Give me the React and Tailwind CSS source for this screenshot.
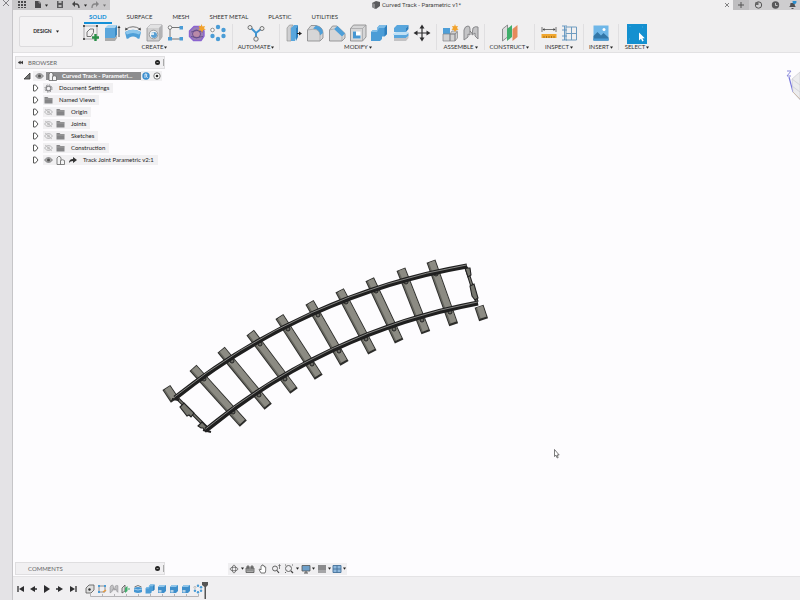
const Svg = ({ s = 18, w, children, className = '' }) => (
    <svg width={w || s} height={s} viewBox={`0 0 ${w || s} ${s}`} className={`shrink-0 ${className}`} fill="none" aria-hidden="true">
        {children}
    </svg>
);

const Caret = ({ className = '' }) => (
    <svg width="3" height="3" viewBox="0 0 3 3" className={`shrink-0 ${className}`} aria-hidden="true">
        <path d="M0 .5h3L1.500 2.800z" fill="#222" />
    </svg>
);

/* toolbar icons */

const SketchIcon = () => (
    <Svg>
        <rect x="2" y="2" width="13" height="13" stroke="#9a9a9c" strokeWidth=".8" />
        <path d="M5 12.500V8l3-3h3.500v3.500L9 12.500z" stroke="#666" strokeWidth=".9" />
        <path d="M1 1h2v2H1zM14 1h2v2h-2zM1 14h2v2H1z" fill="#555" />
        <path d="M13.500 10v7M10 13.500h7" stroke="#2a8f48" strokeWidth="2.400" />
    </Svg>
);

const ExtrudeIcon = () => (
    <Svg>
        <path d="M2 4l3-3h9l-2 3z" fill="#a9d3ef" />
        <path d="M2 4h10v10H2z" fill="#5aa6dc" />
        <path d="M12 4l2-3v10l-2 3z" fill="#3a88c2" />
        <path d="M2 14h10l2-3v3l-2 3H2z" fill="#aaa" />
        <path d="M16 3v10" stroke="#444" strokeWidth=".9" />
        <path d="M14.500 4L16 1.500 17.500 4z" fill="#333" />
    </Svg>
);

const RevolveIcon = () => (
    <Svg>
        <path d="M1 8q8-4.500 16 0l-1.500 6.500q-1.500 1-3-1-3.500-2-7 0-1.500 2-3 1z" fill="#4f9fd8" />
        <path d="M1 8q8-4.500 16 0l-2 2.500q-6-3-12 0z" fill="#8cc6ec" />
        <path d="M2 5Q9 .5 16 5" stroke="#666" strokeWidth=".9" />
        <path d="M1 6.500l.5-3 2.500 2zM17 6.500l-.5-3-2.500 2z" fill="#444" />
    </Svg>
);

const HoleIcon = () => (
    <Svg>
        <path d="M2 4l3-3h12v12l-3 4H2z" fill="#d0d0d1" stroke="#909092" strokeWidth=".8" />
        <path d="M2 4l3-3h12l-3 3z" fill="#e2e2e3" />
        <path d="M14 4l3-3v12l-3 4z" fill="#b2b2b4" />
        <circle cx="8.500" cy="10.500" r="4.300" fill="#f6f6f7" stroke="#88888a" strokeWidth=".8" />
        <circle cx="9" cy="11" r="3" fill="#5a9fd2" />
        <path d="M6 8.500h3v2.500H6z" fill="#d5e8f5" />
    </Svg>
);

const PatternRectIcon = () => (
    <Svg>
        <path d="M3 4v11M3 3.500h11M3 15h11" stroke="#555" strokeWidth=".8" />
        <circle cx="3" cy="3.500" r="1.800" fill="#fff" stroke="#555" strokeWidth=".7" />
        <path d="M12.500 2H16v3.500h-3.500zM12.500 13H16v3.500h-3.500zM1 13h4v3.500H1z" fill="#4a9cd6" />
    </Svg>
);

const FormIcon = () => (
    <Svg>
        <path d="M6 2.500h6l4 4.500v5L13 16.500H5.500L1.500 12.500V7z" fill="#9a7fb5" stroke="#8a63d0" strokeWidth="1.400" strokeLinejoin="round" />
        <circle cx="8.500" cy="10" r="4" fill="#b98aa8" stroke="#6a4f90" strokeWidth="1" />
        <path d="M3 8q6-3 12 0M3 12.500q6 2 12 0" stroke="#5e4a86" strokeWidth=".8" />
        <path d="M13.500 0l1 2.500L17 2l-1 2.200 1.800 1.500-2.500.4L14 8.500l-1.200-2.300-2.500.3 1.500-1.900L10.500 2l2.300.3z" fill="#f2a32c" />
    </Svg>
);

const PatternCircIcon = ({ s = 18 }) => (
    <svg width={s} height={s} viewBox="0 0 18 18" fill="none" className="shrink-0" aria-hidden="true">
        <circle cx="3.500" cy="6" r="1.800" fill="#fff" stroke="#777" strokeWidth=".8" />
        <g fill="#4a9cd6">
            <circle cx="9" cy="3" r="2.200" />
            <circle cx="14.500" cy="6" r="2.200" />
            <circle cx="14.500" cy="12" r="2.200" />
            <circle cx="9" cy="15" r="2.200" />
            <circle cx="3.500" cy="12" r="2.200" />
        </g>
    </svg>
);

const AutomateIcon = () => (
    <Svg>
        <path d="M4 4l5 5 5-4M9 9v5" stroke="#3f95d2" strokeWidth="2" />
        <g fill="#eee" stroke="#666" strokeWidth=".9">
            <circle cx="3" cy="3.500" r="2" />
            <circle cx="15" cy="4.500" r="2" />
            <circle cx="9" cy="15" r="2.200" />
        </g>
    </Svg>
);

const PressPullIcon = () => (
    <Svg>
        <path d="M2 4l2.500-3H8L6 4v13H2z" fill="#cfcfd1" stroke="#8a8a8a" strokeWidth=".6" />
        <path d="M6 4l3-3h4l-2 3v10l-1 3H6z" fill="#58a6dd" />
        <path d="M11 4l2-3v12l-2 4z" fill="#2f80bd" />
        <path d="M12 9.500h3" stroke="#222" strokeWidth="1" />
        <path d="M14 7.500l3 2-3 2z" fill="#222" />
    </Svg>
);

const FilletIcon = () => (
    <Svg>
        <path d="M1.500 17V6l3.500-4.500h5Q17 3 17 9v5l-3 3z" fill="#d6d6d7" stroke="#858587" strokeWidth=".8" />
        <path d="M7 4.500l3-3Q17 3 17 9l-3 2.500Q14 5.500 7 4.500z" fill="#4f9fd8" />
        <path d="M1.500 6Q14 3 14 11.500V17" stroke="#99999b" strokeWidth=".6" />
    </Svg>
);

const ChamferIcon = () => (
    <Svg>
        <path d="M1.500 17V6L4.500 2H9l8 7.500V14l-3 3z" fill="#d6d6d7" stroke="#858587" strokeWidth=".8" />
        <path d="M6 5l3.500-3 7.500 7.500-3 3z" fill="#4f9fd8" />
        <path d="M1.500 6L6 5M14 12.500V17" stroke="#99999b" strokeWidth=".6" />
    </Svg>
);

const ShellIcon = () => (
    <Svg>
        <path d="M1.500 4.500l3-3.500H17v12l-3.500 4h-12z" fill="#d6d6d7" stroke="#858587" strokeWidth=".8" />
        <path d="M1.500 4.500h12l3.500-3.500M13.500 4.500V17" stroke="#99999b" strokeWidth=".6" />
        <path d="M4 7.500h7.500v7H4z" fill="#fff" />
        <path d="M4 7.500h3v4l-3 3zM4 14.500l3-3h4.500v3z" fill="#4596d2" />
    </Svg>
);

const CombineIcon = ({ s = 18 }) => (
    <svg width={s} height={s} viewBox="0 0 18 18" fill="none" className="shrink-0" aria-hidden="true">
        <path d="M1 8l2-2h4V4l2.500-3H17v9l-2.500 2.500H12V15l-2 2H1z" fill="#4b9cd6" />
        <path d="M1 8l2-2h4V4l2.500-3H17l-2.500 3H9L7 8z" fill="#7dbbe6" />
        <path d="M14.500 4L17 1v9l-2.500 2.500z" fill="#2e7fbd" />
    </svg>
);

const SplitIcon = () => (
    <Svg>
        <path d="M2 4l3-3h11.500L14 4v4H2z" fill="#58a6dd" />
        <path d="M14 4l2.500-3v4L14 8z" fill="#2f80bd" />
        <path d="M1 10l3-2h13l-3 3H1z" fill="#bfe0f5" />
        <path d="M2 11h12v3H2zM14 11l2.500-2v3L14 14z" fill="#58a6dd" />
        <path d="M2 14h12v3H2zM14 14l2.500-2v2L14 17z" fill="#c2c2c4" />
    </Svg>
);

const MoveIcon = () => (
    <Svg>
        <path d="M9 3v12M3 9h12" stroke="#2d2d2f" strokeWidth="1.200" />
        <path d="M9 .5L11.500 4.500h-5zM9 17.500L11.500 13.500h-5zM.5 9L4.500 6.500v5zM17.500 9L13.500 6.500v5z" fill="#2d2d2f" />
    </Svg>
);

const NewComponentIcon = () => (
    <Svg>
        <path d="M2 4h7v6H2z" fill="#4f9fd8" />
        <path d="M2 10h7v7H2zM9 10h5v7H9zM14 10l2.500-2v6L14 17zM9 10l2-3h5.500L14 10z" fill="#d2d2d3" stroke="#858587" strokeWidth=".7" />
        <path d="M14 0l.8 2.200L17 2l-1 2 1.500 1.700-2.300.2L14 8l-1.200-2.100-2.300-.2L12 4l-1-2 2.200.2z" fill="#f2a32c" />
    </Svg>
);

const JointIcon = ({ s = 18 }) => (
    <svg width={s} height={s} viewBox="0 0 18 18" fill="none" className="shrink-0" aria-hidden="true">
        <path d="M2 16V6q1-4 4-4 2 0 2 3v6l-2-1v3zM16 15V3q-3-1-5 1l-1 7 3-2v3z" fill="#c4c4c6" stroke="#88888b" strokeWidth="1" />
        <path d="M8 7l2.500 3" stroke="#777" strokeWidth="1" />
    </svg>
);

const PlaneIcon = () => (
    <Svg>
        <path d="M1.500 5l5-4v12l-5 4z" fill="#dcdcdd" stroke="#77777a" strokeWidth=".8" />
        <path d="M6 5l5-4v12l-5 4z" fill="#3fae6a" />
        <path d="M11.500 5l5-4v12l-5 4z" fill="#e58a5b" />
    </Svg>
);

const MeasureIcon = () => (
    <Svg>
        <path d="M2 3v5M16 3v5M3 5.500h12" stroke="#555" strokeWidth=".8" />
        <path d="M2.500 5.500l2-1.500v3zM15.500 5.500l-2-1.500v3z" fill="#444" />
        <path d="M1.500 10h15v4h-15z" fill="#f0a62f" />
        <path d="M4 14v-2M6.500 14v-2M9 14v-2M11.500 14v-2M14 14v-2" stroke="#8d5c10" strokeWidth=".7" />
    </Svg>
);

const InterferenceIcon = () => (
    <Svg>
        <path d="M5 3h10.500v13H5zM5 9.500h10.500M10.500 3v13" stroke="#6f9cc0" strokeWidth="1" />
        <path d="M1 2h5M1 6h5M1 12h5M1 16h5M3.500 2v14" stroke="#5b91bd" strokeWidth=".9" />
    </Svg>
);

const InsertIcon = () => (
    <Svg>
        <path d="M1.500 1.500h15v15h-15z" fill="#6fb7e8" />
        <path d="M1.500 12l4-4 3.500 3.500 2.500-2.500 5 4.500v3h-15z" fill="#3377a8" />
        <circle cx="12" cy="5.500" r="1.500" fill="#fff" />
        <path d="M1.500 14.500h15v2h-15z" fill="#4a9cd6" />
    </Svg>
);

const SelectIcon = () => (
    <Svg s={20}>
        <path d="M0 0h20v20H0z" fill="#1490d0" />
        <path d="M2.500 2.500h13v13h-13z" stroke="#5fb8e6" strokeWidth=".7" strokeDasharray="1 12" />
        <path d="M12 8.500v8l2-1.800 1.300 2.800 1.400-.7-1.300-2.600h2.400z" fill="#fff" />
    </Svg>
);

const groups = [
    { name: 'CREATE', width: 'w-[156px]', icons: [SketchIcon, ExtrudeIcon, RevolveIcon, HoleIcon, PatternRectIcon, FormIcon, PatternCircIcon] },
    { name: 'AUTOMATE', width: 'w-[47px]', icons: [AutomateIcon] },
    { name: 'MODIFY', width: 'w-[157px]', icons: [PressPullIcon, FilletIcon, ChamferIcon, ShellIcon, CombineIcon, SplitIcon, MoveIcon] },
    { name: 'ASSEMBLE', width: 'w-[48px]', icons: [NewComponentIcon, JointIcon] },
    { name: 'CONSTRUCT', width: 'w-[50px]', icons: [PlaneIcon] },
    { name: 'INSPECT', width: 'w-[49px]', icons: [MeasureIcon, InterferenceIcon] },
    { name: 'INSERT', width: 'w-[35px]', icons: [InsertIcon] },
    { name: 'SELECT', width: 'w-[36px]', icons: [SelectIcon] },
];

const tabs = ['SOLID', 'SURFACE', 'MESH', 'SHEET METAL', 'PLASTIC', 'UTILITIES'];

const TitleBar = () => (
    <div className="flex h-[10px] items-stretch">
        <div className="flex w-[97px] items-center bg-[#c9c8ca] pl-1">
            <button aria-label="Data panel"><Svg s={9}><path d="M1 0h2v2H1zM4 0h2v2H4zM7 0h2v2H7zM1 3h2v2H1zM4 3h2v2H4zM7 3h2v2H7zM1 6h2v1H1zM4 6h2v1H4zM7 6h2v1H7z" fill="#4a4a4c" /></Svg></button>
            <button aria-label="File" className="ml-2 flex items-center gap-[3px]">
                <Svg s={8}><path d="M1 0h4l2 2v5H1z" fill="#4a4a4c" /><path d="M5 0v2h2" stroke="#c9c8ca" strokeWidth=".6" /></Svg>
                <Caret />
            </button>
            <button aria-label="Save" className="ml-2"><Svg s={8}><path d="M1 0h6v7H1z" fill="#59595b" /><path d="M2.500 0h3v2h-3zM2.500 4h3v2h-3z" fill="#bbb" /></Svg></button>
            <button aria-label="Undo" className="ml-2 flex items-center gap-1">
                <Svg s={8}><path d="M2 3h2q3 0 3 4" stroke="#444" strokeWidth="1.300" /><path d="M0 3l3-3v6z" fill="#444" /></Svg>
                <Caret />
            </button>
            <button aria-label="Redo" className="ml-1 flex items-center gap-1 opacity-50">
                <Svg s={8}><path d="M6 3H4Q1 3 1 7" stroke="#444" strokeWidth="1.300" /><path d="M8 3L5 0v6z" fill="#444" /></Svg>
                <Caret />
            </button>
        </div>
        <div className="flex flex-1 items-center justify-center gap-[2px] font-['Roboto',sans-serif] text-[6px] leading-[8px] text-[#444]">
            <Svg s={8}><path d="M0 2l4-2 4 1v4L4 8 0 6z" fill="#5b5b5d" /><path d="M0 2l3 1v5l-3-2z" fill="#8b8b8d" /></Svg>
            <h1>Curved Track - Parametric v1*</h1>
        </div>
        <button aria-label="Close tab" className="mr-[2px] flex items-center"><Svg s={8}><path d="M2 2l4 4M6 2L2 6" stroke="#666" strokeWidth=".8" /></Svg></button>
        <div className="flex w-[67px] items-center bg-[#cecdcf]">
            <button aria-label="New tab" className="flex h-full w-4 items-center justify-center bg-[#bfbec0]"><Svg s={8}><path d="M4 1v6M1 4h6" stroke="#555" strokeWidth="1" /></Svg></button>
            <button aria-label="Extensions" className="ml-[5px]"><Svg s={9}><circle cx="4.500" cy="4" r="3.200" stroke="#555" strokeWidth="1" /><path d="M1.500 1h3v3h-3z" fill="#666" /></Svg></button>
            <button aria-label="Job status" className="ml-2"><Svg s={9}><circle cx="4.500" cy="4" r="3.700" fill="#59595b" /><path d="M4.500 2v2.500h2" stroke="#ddd" strokeWidth=".8" /></Svg></button>
            <button aria-label="Notifications" className="ml-2"><Svg s={9}><path d="M1 6q1.500-1 1.500-4h4q0 3 1.500 4zM3.500 7h2v1h-2z" fill="#505052" /><circle cx="6.500" cy="1" r="2" fill="#2a8fd0" /></Svg></button>
        </div>
    </div>
);

const Toolbar = () => (
    <header className="border-b border-[#e2e1e3] bg-[#f0eff0]">
        <TitleBar />
        <div className="flex h-[42px]">
            <button className="ml-[6px] mr-1 mt-[6px] flex h-[31px] w-[54px] items-center justify-center gap-1 rounded-[2px] border border-[#dcdbdd] bg-[#f3f2f3] text-[5px] font-bold text-[#222]">
                DESIGN <Caret />
            </button>
            <div>
                <nav className="ml-[7px] flex h-[14px] gap-[10px] text-[6px] leading-[8px] text-[#333]">
                    {tabs.map((tab, i) => (
                        <button
                            key={tab}
                            className={`flex h-[14px] items-start whitespace-nowrap border-b-2 px-[5px] pt-[3px] ${i === 0 ? 'border-[#1490d8] font-bold text-[#1490d8]' : 'border-transparent'}`}
                        >
                            {tab}
                        </button>
                    ))}
                </nav>
                <div className="flex">
                    {groups.map((group) => (
                        <div key={group.name} className={`${group.width} h-[26px] border-r border-[#e0dfe1] last:border-r-0`}>
                            <div className="grid h-[18px] auto-cols-fr grid-flow-col items-center justify-items-center px-[3px]">
                                {group.icons.map((Icon, i) => (
                                    <button key={i} aria-label={`${group.name} tool ${i + 1}`}><Icon /></button>
                                ))}
                            </div>
                            <button className="mt-[1px] flex w-full items-center justify-center gap-[1px] text-[6px] leading-[8px] text-[#333]">
                                {group.name} <Caret />
                            </button>
                        </div>
                    ))}
                </div>
            </div>
        </div>
    </header>
);

/* browser tree */

const Eye = ({ off }) => (
    <Svg s={8} w={9} className={off ? 'opacity-60' : ''}>
        <path d="M.5 4q4-5 8 0-4 5-8 0z" fill={off ? 'none' : '#aaa'} stroke="#77777a" strokeWidth=".8" />
        <circle cx="4.500" cy="4" r="1.500" fill={off ? '#aaa' : '#555'} />
        {off && <path d="M1 1l7 6" stroke="#888" strokeWidth=".7" />}
    </Svg>
);

const Folder = () => <Svg s={8} w={9}><path d="M.5 1h3l1 1h4v5.500h-8z" fill="#858587" /><path d="M.5 3h8" stroke="#bbb" strokeWidth=".5" /></Svg>;

const Gear = () => (
    <Svg s={9}>
        <circle cx="4.500" cy="4.500" r="2.400" stroke="#88888b" strokeWidth="1.300" />
        <circle cx="4.500" cy="4.500" r="3.600" stroke="#88888b" strokeWidth="1" strokeDasharray="1.400 1.430" />
    </Svg>
);

const Doc = ({ color = '#666' }) => (
    <Svg s={9}>
        <path d="M1 2l1.500-1.500H4L5 2v6.500H1z" fill="#f4f4f5" stroke={color} strokeWidth=".8" strokeLinejoin="round" />
        <path d="M4.500 4.500q2-1.500 4 0v4h-4z" fill="#f4f4f5" stroke={color} strokeWidth=".8" />
    </Svg>
);

const Expand = () => <Svg s={8} w={7}><path d="M1.500 1h2L6 4 3.500 7h-2z" fill="#fff" stroke="#444" strokeWidth=".9" /></Svg>;

const rows = [
    { label: 'Document Settings', icons: [Gear] },
    { label: 'Named Views', icons: [Folder] },
    { label: 'Origin', hidden: true, icons: [Folder] },
    { label: 'Joints', hidden: true, icons: [Folder] },
    { label: 'Sketches', hidden: true, icons: [Folder] },
    { label: 'Construction', hidden: true, icons: [Folder] },
];

const PanelHead = ({ title, arrows }) => (
    <div className="flex h-[13px] w-[150px] items-center border border-[#dfdee0] bg-[#f1f0f2] pl-[2px] text-[6px] leading-[8px] text-[#666]">
        <span className="w-[10px]">
            {arrows && <Svg s={5} w={5}><path d="M2.500 1v3L0 2.500zM5 1v3L2.500 2.500z" fill="#333" stroke="#333" strokeWidth=".4" /></Svg>}
        </span>
        <h2 className="flex-1">{title}</h2>
        <button aria-label={`${title} options`}><Svg s={5}><circle cx="2.500" cy="2.500" r="2.500" fill="#222" /><path d="M1.500 2.500h2" stroke="#ccc" strokeWidth=".7" /></Svg></button>
        <span className="ml-[3px] h-[7px] w-px bg-[#aaa]" />
    </div>
);

const Browser = () => (
    <aside className="w-[150px] text-[6px] leading-[10px] text-[#222]">
        <PanelHead title="BROWSER" arrows />
        <div className="mt-[1px] flex h-3 items-center pl-2">
            <Svg s={8}><path d="M7 1v6H1z" fill="#777" stroke="#333" strokeWidth=".8" /></Svg>
            <span className="ml-[2px] flex h-[10px] w-[13px] items-center justify-center bg-[#f1f0f2]"><Eye /></span>
            <span className="flex h-[8px] w-[95px] items-center gap-[5px] bg-[#8d8d8f] pl-[2px] font-bold text-white">
                <Doc /> <span className="whitespace-nowrap">Curved Track - Parametri...</span>
            </span>
            <span className="flex h-[10px] items-center gap-[3px] bg-[#f1f0f2] px-[1px]">
                <Svg s={8}><circle cx="4" cy="4" r="3.700" fill="#3b8ed0" /><path d="M3 6V2h1.500q1 1-.2 2L5.500 6" stroke="#fff" strokeWidth=".8" /></Svg>
                <Svg s={8}><circle cx="4" cy="4" r="3.200" fill="#fff" stroke="#444" strokeWidth=".7" /><circle cx="4" cy="4" r="1.300" fill="#222" /></Svg>
            </span>
        </div>
        <ul>
            {rows.map((row) => (
                <li key={row.label} className="flex h-3 items-center pl-[17px]">
                    <button aria-label={`Expand ${row.label}`}><Expand /></button>
                    <span className="ml-1 flex h-[10px] items-center gap-[3px] bg-[#f1f0f2] pl-[1px] pr-1">
                        {row.hidden && <Eye off />}
                        {row.icons.map((Icon, i) => <Icon key={i} />)}
                        <span className="ml-[3px]">{row.label}</span>
                    </span>
                </li>
            ))}
            <li className="flex h-3 items-center pl-[17px]">
                <button aria-label="Expand Track Joint"><Expand /></button>
                <span className="ml-1 flex h-[10px] items-center gap-[3px] bg-[#f1f0f2] pl-[1px] pr-1">
                    <Eye />
                    <Doc />
                    <Svg s={8} w={9}><path d="M1 7q0-4 4-4V1l4 3-4 3V5Q2 5 1 7z" fill="#333" /></Svg>
                    <span className="ml-[3px] whitespace-nowrap">Track Joint Parametric v2:1</span>
                </span>
            </li>
        </ul>
    </aside>
);

/* model: each tie runs from its outer end to its inner end */
const ties = [
    [195, 370, 240, 420],
    [223, 352, 265, 403],
    [252, 335, 291, 387],
    [281, 319, 316, 373],
    [311, 305, 342, 359],
    [341, 293, 370, 348],
    [371, 282, 397, 337],
    [402, 272, 424, 328],
    [432, 264, 452, 320],
    [168, 390, 172, 396],
    [480, 309, 482, 315],
];

const bolts = [
    [204, 379], [232, 361], [260, 344], [288, 329], [318, 315], [346, 302], [376, 291], [406, 282], [436, 274],
    [233, 412], [259, 395], [285, 379], [312, 364], [339, 351], [366, 339], [394, 329], [422, 320], [450, 312],
];

const rails = ['M175 398A642 642 0 0 1 467 266', 'M206 430A600 600 0 0 1 478 303'];

const Tie = ({ x1, y1, x2, y2 }) => {
    const len = Math.hypot(x2 - x1, y2 - y1);
    const dx = (x2 - x1) / len;
    const dy = (y2 - y1) / len;
    const a = [x1 - dx * 3, y1 - dy * 3, x2 + dx * 3, y2 + dy * 3];
    return (
        <g>
            <line x1={a[0]} y1={a[1]} x2={a[2] + dx * 2} y2={a[3] + dy * 2} stroke="#2c2c2a" strokeWidth="9.400" />
            <line x1={a[0] + dx} y1={a[1] + dy} x2={a[2]} y2={a[3]} stroke="#66665f" strokeWidth="7.600" />
            <line x1={a[0] + dx + 0.5} y1={a[1] + dy - 0.5} x2={a[2] + 0.5} y2={a[3] - 0.5} stroke="#8c8b83" strokeWidth="6" />
        </g>
    );
};

const Track = () => (
    <svg className="absolute left-[142px] top-[197px]" width="340" height="190" viewBox="155 250 340 190" fill="none" role="img" aria-label="Curved track model">
        <path d="M177 398L208 429M466 267L477 302" stroke="#222" strokeWidth="3.400" />
        <path d="M177 398L208 429M466 267L477 302" stroke="#77776f" strokeWidth="1.400" />
        <g fill="#77776f" stroke="#222" strokeWidth="1.100">
            <path d="M180 407l4-4 10 10-3 4-2-2-2 1z" />
            <path d="M198 426l4-4 7 7-3 3-3-4-2 0z" />
            <path d="M465 268h5l1 7-3 2z" />
            <path d="M470 286l4-2 4 14-3 2-3-4z" />
        </g>
        {ties.map(([x1, y1, x2, y2]) => <Tie key={x1} x1={x1} y1={y1} x2={x2} y2={y2} />)}
        {bolts.map(([x, y]) => <circle key={`${x}-${y}`} cx={x} cy={y} r="2" fill="#6b6b65" stroke="#222" strokeWidth="1" />)}
        {rails.map((d) => (
            <g key={d}>
                <path d={d} stroke="#1f1f1f" strokeWidth="5" />
                <path d={d} stroke="#858583" strokeWidth="1" transform="translate(-.5 -1)" />
            </g>
        ))}
        <path d="M172 399l7 1M203 430l8 2" stroke="#222" strokeWidth="2" />
    </svg>
);

const ViewCube = () => (
    <svg className="absolute right-0 top-[15px]" width="15" height="36" viewBox="0 0 15 36" fill="none" role="img" aria-label="View cube">
        <path d="M2 3h4L2 8h4" stroke="#8080d8" strokeWidth=".9" />
        <path d="M4 9l4 15" stroke="#7878dc" strokeWidth="1.200" />
        <path d="M7 11l8-7v28l-7-8z" fill="#ececee" stroke="#d0d0d4" strokeWidth=".8" />
        <path d="M7 11l8 6M7 18l8 6" stroke="#cfcfd4" strokeWidth=".8" />
        <path d="M8 24l7 7" stroke="#c8b8a8" strokeWidth=".9" />
    </svg>
);

const Pointer = () => (
    <svg className="absolute left-[541px] top-[396px]" width="6" height="10" viewBox="0 0 6 10" aria-hidden="true">
        <path d="M.5.5v7l1.500-1.300L3.200 9l1-.5L3 6h2.200z" fill="#fff" stroke="#444" strokeWidth=".7" />
    </svg>
);

const NavBar = () => (
    <div className="flex h-3 items-center bg-[#f0eff1] pl-[1px]" role="toolbar">
        <button aria-label="Orbit" className="flex items-center gap-[2px]"><Svg s={10}><ellipse cx="5" cy="5" rx="4" ry="1.800" stroke="#666" strokeWidth=".8" /><ellipse cx="5" cy="5" rx="1.800" ry="4" stroke="#666" strokeWidth=".8" /></Svg><Caret /></button>
        <button aria-label="Look at" className="ml-[1px]"><Svg s={10}><path d="M1 4h8v4.500H1zM2 2h2v2H2zM6 2h2v2H6z" fill="#aaa" stroke="#555" strokeWidth=".8" /><path d="M2.500 6h5" stroke="#444" strokeWidth="1" strokeDasharray="1 1" /></Svg></button>
        <button aria-label="Pan" className="ml-[3px]"><Svg s={10}><path d="M3 9L1 5.500l1-.5 1 1V2q.6-.8 1.100 0v-.8q.6-.8 1.200 0V2q.6-.8 1.200 0v1q.6-.7 1.200 0v4L7 9z" fill="#fff" stroke="#555" strokeWidth=".8" /></Svg></button>
        <button aria-label="Zoom" className="ml-[3px]"><Svg s={10}><circle cx="4" cy="4.500" r="2.500" stroke="#666" strokeWidth="1" /><path d="M6 6.500l2 2.500" stroke="#444" strokeWidth="1.200" /><path d="M8.500 1v4M7.500 2l1-1.500 1 1.500" stroke="#555" strokeWidth=".7" /></Svg></button>
        <button aria-label="Fit" className="ml-[3px] flex items-center gap-[2px]"><Svg s={10}><circle cx="4.500" cy="4.500" r="3" stroke="#666" strokeWidth="1" /><path d="M7 7l2 2" stroke="#444" strokeWidth="1.300" /><path d="M1 1h1M8 1h1M1 8.500h1" stroke="#666" strokeWidth="1" /></Svg><Caret /></button>
        <button aria-label="Display settings" className="ml-[2px] flex items-center"><Svg s={10}><path d="M1 1.500h8v5.500H1z" fill="#6e9fc9" stroke="#555" strokeWidth=".8" /><path d="M3 9h4M5 7v2" stroke="#555" strokeWidth="1" /></Svg><Caret className="ml-px" /></button>
        <button aria-label="Grid" className="ml-[2px] flex items-center"><Svg s={10}><path d="M1 1h8v8H1z" fill="#8b8b8d" /><path d="M1 6h8v3H1z" fill="#a5a5a7" /></Svg><Caret className="ml-px" /></button>
        <button aria-label="Viewports" className="ml-px flex items-center pr-[1px]"><Svg s={10}><path d="M1 1.500h8v7H1z" fill="#8fb8dc" stroke="#44709a" strokeWidth=".9" /><path d="M5 1.500v7M1 5h8" stroke="#44709a" strokeWidth=".9" /></Svg><Caret className="ml-px" /></button>
    </div>
);

/* timeline */

const playback = [
    ['First', 'M2 2v6', 'M8 2v6L3 5z'],
    ['Previous', 'M6 5h2', 'M6 2v6L1 5z'],
    ['Play', '', 'M2 1v8l6-4z'],
    ['Next', 'M1 5h2', 'M3 2v6l5-3z'],
    ['Last', 'M8 2v6', 'M2 2v6l5-3z'],
];

const BoxFeature = () => (
    <Svg s={10}>
        <path d="M1 3l2-2h6v6L7 9H1z" fill="#3f8fcb" />
        <path d="M1 3l2-2h6L7 3z" fill="#8fc5ea" />
        <path d="M1.500 6h3v2.500h-3z" fill="#b5d3e8" />
    </Svg>
);

const features = [
    () => <Svg s={10}><path d="M1 4l3-3h5v5L6 9H1z" fill="#ddd" stroke="#555" strokeWidth=".8" /><circle cx="4.500" cy="5.500" r="1.200" fill="#333" /></Svg>,
    () => <Svg s={10}><path d="M2 2h6v6H2z" stroke="#777" strokeWidth=".8" /><path d="M1 1h2v2H1zM7 1h2v2H7zM1 7h2v2H1z" fill="#4a9cd6" /><path d="M6 8l3-2" stroke="#e89a3c" strokeWidth="1.500" /></Svg>,
    () => <JointIcon s={10} />,
    () => <Svg s={10}><path d="M1 4l3-3v6L1 9z" fill="#ddd" stroke="#555" strokeWidth=".8" /><path d="M4 4l2.500-2v5L4 9z" fill="#3fae6a" /><path d="M7 5h2" stroke="#3fae6a" strokeWidth="1.200" /></Svg>,
    () => <Svg s={10}><path d="M1 4q4-2 8 0v4q-4 2-8 0z" fill="#4596d2" /><path d="M1.500 3q3.500-3 7 0" stroke="#555" strokeWidth=".8" /><path d="M1 5q4 2 8 0" stroke="#a9d3ef" strokeWidth=".9" /></Svg>,
    () => <CombineIcon s={10} />,
    BoxFeature,
    BoxFeature,
    BoxFeature,
    () => <PatternCircIcon s={10} />,
];

const Timeline = () => (
    <footer className="flex h-6 items-start border-t border-[#e4e3e5] bg-[#f0eff1] pl-[3px] pt-[5px]">
        <div className="flex gap-[3px] pt-[2px]">
            {playback.map(([name, line, arrow]) => (
                <button key={name} aria-label={name}>
                    <Svg s={10}><path d={line} stroke="#2d2d2f" strokeWidth="1.300" /><path d={arrow} fill="#2d2d2f" /></Svg>
                </button>
            ))}
        </div>
        <div className="ml-[6px] pt-[2px]">
            <div className="flex">
                {features.map((Icon, i) => (
                    <button key={i} aria-label={`Feature ${i + 1}`} className="flex w-3 justify-center"><Icon /></button>
                ))}
            </div>
            <svg width="120" height="5" viewBox="0 0 120 5" fill="none" aria-hidden="true">
                <path d="M6.500 0v2.500h108V0M18.500 0v2M30.500 0v2M42.500 0v2M54.500 0v2M66.500 0v2M78.500 0v2M90.500 0v2M102.500 0v2" stroke="#b5b4b7" />
            </svg>
        </div>
        <svg width="8" height="17" viewBox="0 0 8 17" className="-ml-[3px]" aria-hidden="true">
            <path d="M1 0h6v3L5 5v12H3.500V5L1 3z" fill="#555" />
        </svg>
    </footer>
);

export default function App() {
    return (
        <div className="flex h-screen overflow-hidden bg-[#fdfcfe] font-['Lato','Liberation_Sans',sans-serif]">
            <div className="w-[13px] shrink-0 border-r border-[#c6c5c8] bg-[#e4e3e6]">
                <button aria-label="Close panel" className="flex h-2 w-full items-center justify-center"><Svg s={8}><path d="M1 0l6 6M7 0L1 6" stroke="#77777a" strokeWidth=".9" /></Svg></button>
            </div>
            <div className="flex min-w-0 flex-1 flex-col">
                <Toolbar />
                <main className="relative flex flex-1 flex-col justify-between pl-[2px] pt-[3px]">
                    <Track />
                    <ViewCube />
                    <Pointer />
                    <Browser />
                    <div className="flex items-center pb-[1px]">
                        <PanelHead title="COMMENTS" />
                        <div className="ml-[63px]"><NavBar /></div>
                    </div>
                </main>
                <Timeline />
            </div>
        </div>
    );
}
